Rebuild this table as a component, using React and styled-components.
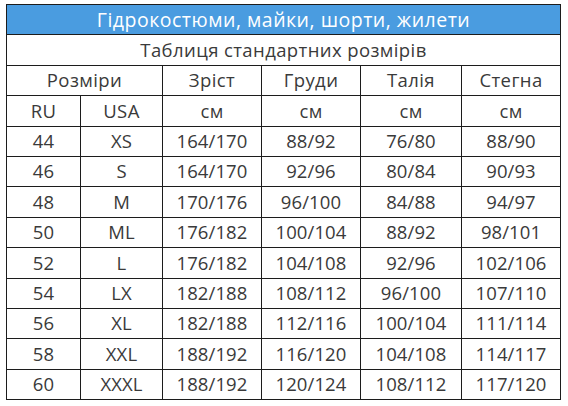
import React from "react";
import styled, { createGlobalStyle } from "styled-components";

const GlobalStyle = createGlobalStyle`
  body {
    margin: 0;
    background: #ffffff;
    font-family: "Open Sans", "Liberation Sans", sans-serif;
  }
`;

const rows = [
  ["44", "XS", "164/170", "88/92", "76/80", "88/90"],
  ["46", "S", "164/170", "92/96", "80/84", "90/93"],
  ["48", "M", "170/176", "96/100", "84/88", "94/97"],
  ["50", "ML", "176/182", "100/104", "88/92", "98/101"],
  ["52", "L", "176/182", "104/108", "92/96", "102/106"],
  ["54", "LX", "182/188", "108/112", "96/100", "107/110"],
  ["56", "XL", "182/188", "112/116", "100/104", "111/114"],
  ["58", "XXL", "188/192", "116/120", "104/108", "114/117"],
  ["60", "XXXL", "188/192", "120/124", "108/112", "117/120"],
];

const widths = [74, 82, 99, 99, 101, 99];

const Page = styled.div`
  padding: 4px 0 0 6px;
`;

const Table = styled.table`
  border-collapse: collapse;
  table-layout: fixed;
  width: 555px;
  color: #3a3a3a;
  font-size: 18.5px;
  letter-spacing: 0.4px;
`;

const Cell = styled.td`
  border: 1.2px solid #1c1c1c;
  height: 29.4px;
  padding: 0;
  text-align: center;
  vertical-align: middle;
  line-height: 1;
  white-space: nowrap;
  letter-spacing: ${(p) => (p.$num ? "0.1px" : "0.4px")};
`;

const TitleCell = styled(Cell)`
  background: #4a9ce0;
  color: #ffffff;
  font-size: 19.5px;
  letter-spacing: 0.5px;
`;

const SizeChart = () => {
  return (
    <Table>
      <colgroup>
        {widths.map((w, i) => (
          <col key={i} style={{ width: w }} />
        ))}
      </colgroup>
      <tbody>
        <tr>
          <TitleCell colSpan={6}>Гідрокостюми, майки, шорти, жилети</TitleCell>
        </tr>
        <tr>
          <Cell colSpan={6}>Таблиця стандартних розмірів</Cell>
        </tr>
        <tr>
          <Cell colSpan={2}>Розміри</Cell>
          <Cell>Зріст</Cell>
          <Cell>Груди</Cell>
          <Cell>Талія</Cell>
          <Cell>Стегна</Cell>
        </tr>
        <tr>
          <Cell>RU</Cell>
          <Cell>USA</Cell>
          <Cell>см</Cell>
          <Cell>см</Cell>
          <Cell>см</Cell>
          <Cell>см</Cell>
        </tr>
        {rows.map((r) => (
          <tr key={r[0]}>
            {r.map((v, i) => (
              <Cell key={i} $num>
                {v}
              </Cell>
            ))}
          </tr>
        ))}
      </tbody>
    </Table>
  );
};

export default function App() {
  return (
    <Page>
      <GlobalStyle />
      <SizeChart />
    </Page>
  );
}
